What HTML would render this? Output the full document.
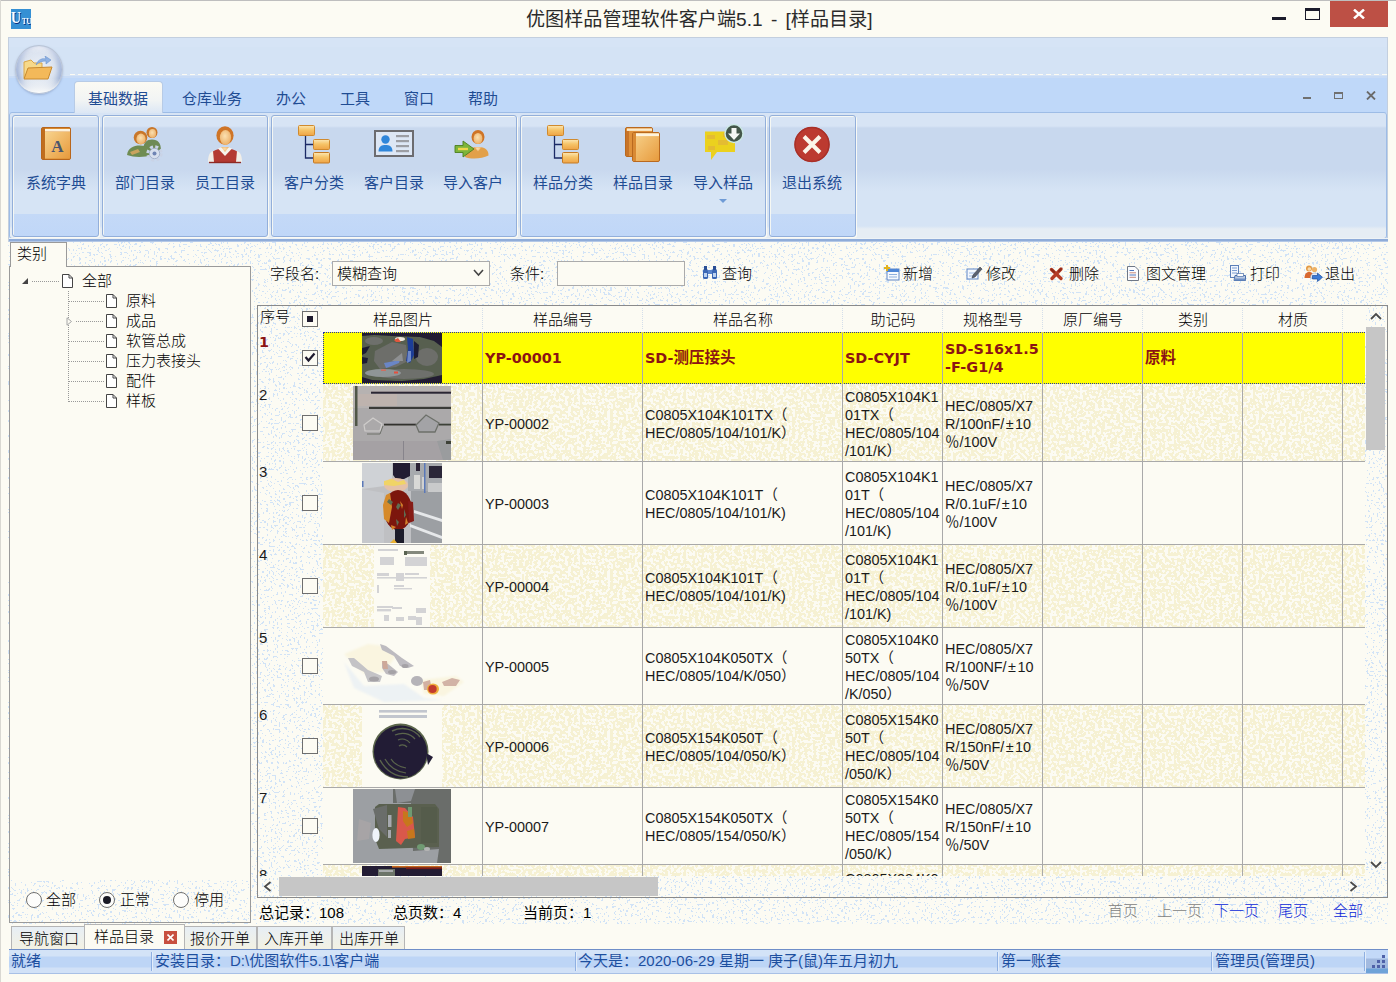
<!DOCTYPE html>
<html lang="zh-CN"><head><meta charset="utf-8"><title>优图样品管理软件客户端5.1 - [样品目录]</title>
<style>
html,body{margin:0;padding:0}
body{width:1396px;height:982px;position:relative;overflow:hidden;background:#FCFBF3;font-family:"Liberation Sans","Noto Sans CJK SC",sans-serif;color:#111;font-size:15px}
.a{position:absolute;box-sizing:border-box}
.c{text-align:center;white-space:nowrap}
.nw{white-space:nowrap}
.rl{color:#1F4C93;font-size:15px;line-height:20px;text-align:center;white-space:nowrap}
.grp{border:1px solid #93AFDA;border-radius:3px;background:linear-gradient(rgba(255,255,255,0) 0,rgba(255,255,255,0) 98px,#C4D9F7 98px,#C0D7F8 100%);box-shadow:inset 1px 1px 0 rgba(252,251,243,.85),1px 1px 0 rgba(252,251,243,.95)}
.sim{font-family:"Liberation Sans","Noto Sans CJK SC",sans-serif;font-weight:300;color:#000}
.t15{font-size:15px;line-height:18px;white-space:nowrap}
.cell{font-size:14.4px;line-height:18px;color:#1a1a1a}
.sel{font-family:"DejaVu Sans","Noto Sans CJK SC",sans-serif;font-weight:bold;color:#8B1414;font-size:14.4px;line-height:18px}
.vl{background:#A9A9A9;width:1px}
.hl{background:#A9A9A9;height:1px}
.cb{border:1px solid #6E6E6E;background:#FCFBF3}
.st{color:#1D4F9F;font-size:15px;line-height:20px;white-space:nowrap}
.bt{font-size:15px;line-height:20px;color:#000;white-space:nowrap;font-weight:300}

</style></head>
<body>
<div class="a" style="left:0px;top:0px;width:1396px;height:1px;background:#BEBEBE"></div>
<div class="a" style="left:0px;top:0px;width:1px;height:982px;background:#D9D8D2"></div>
<div class="a nw" style="left:11px;top:9px;width:20px;height:20px;background:#3590D4;color:#fff;font-family:'Liberation Serif',serif;font-weight:bold;font-size:17px;line-height:19px;overflow:hidden;text-shadow:1px 1px 0 #0B2A7A"><span style="position:absolute;left:0;top:-1px;transform:scaleX(.82);transform-origin:0 0">U</span><span style="position:absolute;left:11px;top:8px;font-size:8px;line-height:9px;transform:scaleX(.85);transform-origin:0 0">TU</span></div>
<div class="a nw" style="left:526px;top:6px;width:400px;height:28px;font-size:19.1px;line-height:28px;color:#2b2b2b;word-spacing:3px">优图样品管理软件客户端5.1 - [样品目录]</div>
<div class="a" style="left:1272px;top:17px;width:14px;height:3px;background:#1b1b2b"></div>
<div class="a" style="left:1305px;top:8px;width:15px;height:12px;border:1px solid #1b1b2b;border-top-width:3px"></div>
<div class="a" style="left:1330px;top:1px;width:58px;height:26px;background:#BD5045"></div>
<svg class="a" style="left:1353px;top:9px" width="12" height="10" viewBox="0 0 12 10"><path d="M1 0.5 L11 9.5 M11 0.5 L1 9.5" stroke="#fff" stroke-width="2.4" fill="none"/></svg>
<div class="a" style="left:8px;top:37px;width:1380px;height:205px;background:#D6E4F6;border:1px solid #C3CFDF;border-bottom:none"></div>
<div class="a" style="left:9px;top:47px;width:1378px;height:28px;background:#D4E3F5"></div>
<div class="a" style="left:70px;top:74px;width:1317px;height:1px;background:repeating-linear-gradient(90deg,#FCFBF3 0 5px,transparent 5px 8px)"></div>
<div class="a" style="left:9px;top:76px;width:1378px;height:2px;background:#C9DCF6"></div>
<div class="a" style="left:9px;top:78px;width:1378px;height:35px;background:#BFD8F9"></div>
<div class="a" style="left:9px;top:112px;width:1378px;height:127px;background:linear-gradient(#D7E4F5 0,#D7E4F5 13px,#C8D8EE 15px,#C8D8EE 56px,#D6E4F5 78px,#D6E4F5 113px,#E6EDF4 116px,#E6EDF4 100%);border:1px solid #9DBCE6;border-radius:3px"></div>
<div class="a" style="left:9px;top:238px;width:1379px;height:1px;background:#EEF3F6"></div>
<div class="a" style="left:9px;top:239px;width:1379px;height:3px;background:linear-gradient(#8FACD9 0,#8FACD9 66%,#B4C8E6 67%,#B4C8E6 100%)"></div>
<div class="a" style="left:15px;top:45px;width:48px;height:49px;border-radius:50%;background:radial-gradient(circle at 50% 45%,#E9EEF6 0,#DCE4F0 45%,#C5D2E6 70%,#D8E0EC 100%);border:1px solid #B9C4D6;box-shadow:0 1px 2px rgba(120,140,180,.5),inset 6px 0 5px -3px rgba(125,150,200,.55),inset -6px 0 5px -3px rgba(125,150,200,.55),inset 0 5px 4px -2px rgba(250,250,252,.9)"></div>
<div class="a" style="left:18px;top:78px;width:42px;height:15px;border-radius:0 0 21px 21px/0 0 15px 15px;background:linear-gradient(rgba(255,255,255,0),#FDFDFB)"></div>
<svg class="a" style="left:22px;top:56px" width="32" height="26" viewBox="0 0 32 26"><path d="M2 6 L9 4 L12 7 L20 7 L20 13 L2 22 Z" fill="#F7D98A" stroke="#D9A64A" stroke-width="1"/><path d="M6 12 L30 11 L26 23 L2 23 Z" fill="#F3B95A" stroke="#C98A2E" stroke-width="1"/><path d="M14 9 C16 3 21 2 24 3 L23 0 L29 4 L24 8 L24 5 C20 5 17 6 14 9 Z" fill="#8FB2E4" stroke="#6C93CE" stroke-width=".6"/></svg>
<div class="a" style="left:74px;top:81px;width:89px;height:32px;background:linear-gradient(#FBFAF3,#F1F4F4 60%,#DCE7F5);border:1px solid #B7CBE6;border-bottom:none;border-radius:4px 4px 0 0"></div>
<div class="a rl" style="left:68px;top:89px;width:100px;height:20px;">基础数据</div>
<div class="a rl" style="left:162px;top:89px;width:100px;height:20px;">仓库业务</div>
<div class="a rl" style="left:241px;top:89px;width:100px;height:20px;">办公</div>
<div class="a rl" style="left:305px;top:89px;width:100px;height:20px;">工具</div>
<div class="a rl" style="left:369px;top:89px;width:100px;height:20px;">窗口</div>
<div class="a rl" style="left:433px;top:89px;width:100px;height:20px;">帮助</div>
<div class="a" style="left:1303px;top:97px;width:8px;height:2px;background:#707070"></div>
<div class="a" style="left:1334px;top:92px;width:9px;height:7px;border:1px solid #707070;border-top-width:2px"></div>
<svg class="a" style="left:1366px;top:91px" width="10" height="9" viewBox="0 0 10 9"><path d="M1 0.5 L9 8.5 M9 0.5 L1 8.5" stroke="#6a6a6a" stroke-width="1.8" fill="none"/></svg>
<div class="a grp" style="left:12px;top:115px;width:87px;height:122px;"></div>
<div class="a grp" style="left:102px;top:115px;width:166px;height:122px;"></div>
<div class="a grp" style="left:271px;top:115px;width:246px;height:122px;"></div>
<div class="a grp" style="left:520px;top:115px;width:246px;height:122px;"></div>
<div class="a grp" style="left:769px;top:115px;width:87px;height:122px;"></div>
<div class="a rl" style="left:16px;top:173px;width:80px;height:20px;">系统字典</div>
<div class="a rl" style="left:105px;top:173px;width:80px;height:20px;">部门目录</div>
<div class="a rl" style="left:185px;top:173px;width:80px;height:20px;">员工目录</div>
<div class="a rl" style="left:274px;top:173px;width:80px;height:20px;">客户分类</div>
<div class="a rl" style="left:354px;top:173px;width:80px;height:20px;">客户目录</div>
<div class="a rl" style="left:433px;top:173px;width:80px;height:20px;">导入客户</div>
<div class="a rl" style="left:523px;top:173px;width:80px;height:20px;">样品分类</div>
<div class="a rl" style="left:603px;top:173px;width:80px;height:20px;">样品目录</div>
<div class="a rl" style="left:683px;top:173px;width:80px;height:20px;">导入样品</div>
<div class="a rl" style="left:772px;top:173px;width:80px;height:20px;">退出系统</div>
<div class="a" style="left:719px;top:199px;width:0px;height:0px;border:4px solid transparent;border-top:4px solid #6F9BD6;width:0;height:0"></div>
<svg class="a" width="0" height="0" style="left:0;top:0"><defs><linearGradient id="gb" x1="0" y1="0" x2="1" y2="1"><stop offset="0" stop-color="#F8D48E"/><stop offset="1" stop-color="#E79A3C"/></linearGradient><linearGradient id="gbx" x1="0" y1="0" x2="0" y2="1"><stop offset="0" stop-color="#FCE7B4"/><stop offset=".45" stop-color="#F6C468"/><stop offset="1" stop-color="#EFA446"/></linearGradient><radialGradient id="gsk" cx=".45" cy=".4" r=".7"><stop offset="0" stop-color="#FBE0B0"/><stop offset="1" stop-color="#E9A95E"/></radialGradient></defs></svg>
<svg class="a" style="left:40px;top:126px" width="34" height="36" viewBox="0 0 34 36"><rect x="1.5" y="1.5" width="29" height="32" rx="1.5" fill="#D98A2E" stroke="#B8661C"/><rect x="2" y="2" width="3" height="31" fill="#C06E1E"/><rect x="5" y="3" width="25" height="2.6" fill="#FDF3DE"/><rect x="5" y="6" width="25" height="26.5" fill="url(#gb)"/><text x="17.5" y="26" font-family="Liberation Serif,serif" font-weight="bold" font-size="17" text-anchor="middle" fill="#4A556E">A</text></svg>
<svg class="a" style="left:126px;top:124px" width="38" height="40" viewBox="0 0 38 40"><circle cx="26" cy="8.5" r="5.5" fill="#C9772A"/><ellipse cx="26.5" cy="9.5" rx="3.6" ry="4.4" fill="url(#gsk)"/><path d="M17 27 C17 18 21 15.5 26 15.5 C32 15.5 35 19 35 27 Z" fill="#6E8A55"/><circle cx="14.5" cy="13.5" r="6.8" fill="#C9772A"/><ellipse cx="15" cy="15" rx="4.6" ry="5.4" fill="url(#gsk)"/><path d="M1 31 C2 24 7 21.5 14 21.5 C21 21.5 26 25 26 31 C18 33.5 8 33.5 1 31 Z" fill="#6F8C52"/><path d="M4 28 L12 25 L14 28 L6 31 Z" fill="#C9A35E"/><circle cx="28.500" cy="29.500" r="6.5" fill="none" stroke="#C9D3E6" stroke-width="3.4" stroke-dasharray="2.9 2.2"/><circle cx="28.5" cy="29.5" r="5.2" fill="#D7DFEE" stroke="#9AA8C4" stroke-width=".8"/><circle cx="28.5" cy="29.5" r="2" fill="#6F84B4"/></svg>
<svg class="a" style="left:206px;top:124px" width="38" height="40" viewBox="0 0 38 40"><ellipse cx="19" cy="11.5" rx="8.6" ry="9.2" fill="#CF7426"/><ellipse cx="19.5" cy="13.5" rx="5.6" ry="7.4" fill="url(#gsk)"/><path d="M3 38 C3 28 8 24.5 19 24.5 C30 24.5 35 28 35 38 Z" fill="#B43A32"/><path d="M12 24.5 L19 32 L26 24.5 L22 23 H16 Z" fill="#F6F3EC"/><path d="M15 23 h8 l-4 5 z" fill="url(#gsk)"/><path d="M2 38 C2 31 4 28 7 27 L8 38 Z" fill="#F1EEE8"/><path d="M36 38 C36 31 34 28 31 27 L30 38 Z" fill="#F1EEE8"/><path d="M3 38.5 H35" stroke="#8E2A24" stroke-width="1.4"/></svg>
<svg class="a" style="left:297px;top:124px" width="36" height="42" viewBox="0 0 36 42"><path d="M8.500 11 V34 H16 M8.500 20.500 H16" stroke="#1B2A66" stroke-width="1.3" fill="none"/><rect x="1.500" y="1.500" width="16" height="10" rx="1" fill="url(#gbx)" stroke="#D08A2E"/><rect x="16.500" y="15.500" width="16" height="10" rx="1" fill="url(#gbx)" stroke="#D08A2E"/><rect x="16.500" y="28.500" width="16" height="10.500" rx="1" fill="url(#gbx)" stroke="#C47A24"/></svg>
<svg class="a" style="left:546px;top:124px" width="36" height="42" viewBox="0 0 36 42"><path d="M8.500 11 V34 H16 M8.500 20.500 H16" stroke="#1B2A66" stroke-width="1.3" fill="none"/><rect x="1.500" y="1.500" width="16" height="10" rx="1" fill="url(#gbx)" stroke="#D08A2E"/><rect x="16.500" y="15.500" width="16" height="10" rx="1" fill="url(#gbx)" stroke="#D08A2E"/><rect x="16.500" y="28.500" width="16" height="10.500" rx="1" fill="url(#gbx)" stroke="#C47A24"/></svg>
<svg class="a" style="left:373px;top:129px" width="42" height="30" viewBox="0 0 42 30"><rect x="2" y="2" width="38" height="25" fill="#DDE7F5" stroke="#6C6C70" stroke-width="2"/><circle cx="12.5" cy="10.5" r="4.2" fill="#2F86DA"/><path d="M5.500 22.500 C5.500 17 9 16 12.500 16 C16 16 19.500 17 19.500 22.500 Z" fill="#2F86DA"/><rect x="23" y="6" width="13" height="2.200" fill="#9C9EA4"/><rect x="23" y="11" width="13" height="2.200" fill="#9C9EA4"/><rect x="23" y="16" width="13" height="2.200" fill="#9C9EA4"/><rect x="23" y="21" width="13" height="2.200" fill="#9C9EA4"/></svg>
<svg class="a" style="left:452px;top:126px" width="40" height="38" viewBox="0 0 40 38"><ellipse cx="26" cy="11" rx="6.500" ry="7" fill="#CF7426"/><ellipse cx="26" cy="12.500" rx="4.400" ry="5.600" fill="url(#gsk)"/><path d="M13 31 C13 24 18 21 26 21 C33.500 21 36.500 24 36.500 29.500 C30 33 19 33.500 13 31 Z" fill="#E2A04A"/><path d="M22.500 21 h7 l-3.500 4.500 z" fill="url(#gsk)"/><path d="M3 19.500 H11 V15 L22 23 L11 31 V26.500 H3 Z" fill="#7DB53A" stroke="#4C7F1E" stroke-width=".9"/><path d="M6 23 H16" stroke="#EFD64A" stroke-width="2.400"/></svg>
<svg class="a" style="left:624px;top:125px" width="38" height="38" viewBox="0 0 38 38"><rect x="1.500" y="2.500" width="27" height="29" rx="1.500" fill="#E0913A" stroke="#B9691F"/><rect x="3" y="3.500" width="25" height="2.400" fill="#FBEBCB"/><rect x="2" y="6" width="3" height="25" fill="#C87428"/><rect x="8.500" y="7.500" width="27" height="29" rx="1.500" fill="url(#gb)" stroke="#B9691F"/><rect x="9" y="8" width="3" height="28" fill="#D98A34"/><rect x="12" y="8.500" width="23" height="2.600" fill="#FDF3DE"/></svg>
<svg class="a" style="left:703px;top:122px" width="44" height="42" viewBox="0 0 44 42"><path d="M2 9.500 H32 V30 H14 L8 38 V30 H2 Z" fill="#EBD11E"/><path d="M4 13 h8 v4 h-8z M15 18 h10 v5 h-10z M5 24 h7 v4 h-7z M20 11 h6 v4 h-6z" fill="#E2B43A" opacity=".75"/><circle cx="31" cy="11.500" r="9" fill="#44574A" stroke="#CDEAE6" stroke-width="1.400"/><path d="M28.500 6 h5 v5.500 h3.500 l-6 6.500 l-6 -6.500 h3.500 z" fill="#F4F7F4"/></svg>
<svg class="a" style="left:793px;top:126px" width="38" height="38" viewBox="0 0 38 38"><circle cx="19" cy="18.500" r="17.500" fill="#BC3A30"/><circle cx="19" cy="18.500" r="17" fill="none" stroke="#A83028" stroke-width="1.500"/><path d="M11 10.500 L27 26.500 M27 10.500 L11 26.500" stroke="#FBF5EA" stroke-width="4" stroke-linecap="butt"/></svg>
<div class="a" style="left:8px;top:242px;width:1380px;height:708px;background:#FCFBF3"></div>
<svg class="a" style="left:0;top:0" width="1396" height="982"><defs><filter id="dy" x="0" y="0" width="100%" height="100%" color-interpolation-filters="sRGB"><feTurbulence type="fractalNoise" baseFrequency="0.33" numOctaves="1" seed="3"/><feColorMatrix type="matrix" values="0 0 0 0 0.965  0 0 0 0 0.945  0 0 0 0 0.828  1 0 0 0 0"/><feComponentTransfer><feFuncA type="discrete" tableValues="0 0 0 0 0 0 0 0 0 0 0 0 0 0 0 0 0 0 0 1 1 1 1 1 1 1 1 1 1 1 1 1 1 1 1 1 1 1 1 1"/></feComponentTransfer></filter><filter id="db" x="0" y="0" width="100%" height="100%" color-interpolation-filters="sRGB"><feTurbulence type="fractalNoise" baseFrequency="0.48" numOctaves="1" seed="7"/><feColorMatrix type="matrix" values="0 0 0 0 0.82  0 0 0 0 0.89  0 0 0 0 0.97  1 0 0 0 0"/><feComponentTransfer><feFuncA type="discrete" tableValues="0 0 0 0 0 0 0 0 0 0 0 0 0 0 0 0 0 0 0 0 0 0 0 0 0 0 0 0 0 0 0 0 0 0 0 0 0 0 0 0 0 0 0 0 0 0 0 0 0 0 1 1 1 1 1 1 1 1 1 1 1 1 1 1 1 1 1 1 1 1 1 1 1 1 1 1 1 1 1 1"/></feComponentTransfer></filter></defs><rect x="8" y="242" width="1380" height="682" fill="#F6F8F5" filter="url(#db)"/></svg>
<div class="a" style="left:10px;top:267px;width:240px;height:613px;background:#FCFBF3"></div>
<div class="a" style="left:9px;top:266px;width:242px;height:657px;border:1px solid #9A9A9A"></div>
<div class="a" style="left:10px;top:242px;width:57px;height:25px;background:#FCFBF3;border:1px solid #9A9A9A;border-bottom:none"></div>
<div class="a sim t15" style="left:17px;top:245px;width:40px;height:18px;">类别</div>
<svg class="a" style="left:21px;top:277px" width="8" height="8" viewBox="0 0 8 8"><path d="M7 1 V7 H1 Z" fill="#444"/></svg>
<div class="a" style="left:32px;top:281px;width:28px;height:1px;background:repeating-linear-gradient(90deg,#999 0 1px,transparent 1px 2px)"></div>
<svg class="a" style="left:62px;top:274px" width="11" height="14" viewBox="0 0 11 14"><path d="M.5 .5 H7 L10.5 4 V13.5 H.5 Z" fill="#fff" stroke="#444" stroke-width="1"/><path d="M7 .5 V4 H10.5" fill="none" stroke="#444" stroke-width="1"/></svg>
<div class="a sim t15" style="left:82px;top:272px;width:60px;height:18px;">全部</div>
<div class="a" style="left:68px;top:291px;width:1px;height:111px;background:repeating-linear-gradient(180deg,#999 0 1px,transparent 1px 2px)"></div>
<div class="a" style="left:69px;top:301px;width:35px;height:1px;background:repeating-linear-gradient(90deg,#999 0 1px,transparent 1px 2px)"></div>
<svg class="a" style="left:106px;top:294px" width="11" height="14" viewBox="0 0 11 14"><path d="M.5 .5 H7 L10.5 4 V13.5 H.5 Z" fill="#fff" stroke="#444" stroke-width="1"/><path d="M7 .5 V4 H10.5" fill="none" stroke="#444" stroke-width="1"/></svg>
<div class="a sim t15" style="left:126px;top:292px;width:100px;height:18px;">原料</div>
<div class="a" style="left:76px;top:321px;width:28px;height:1px;background:repeating-linear-gradient(90deg,#999 0 1px,transparent 1px 2px)"></div>
<svg class="a" style="left:106px;top:314px" width="11" height="14" viewBox="0 0 11 14"><path d="M.5 .5 H7 L10.5 4 V13.5 H.5 Z" fill="#fff" stroke="#444" stroke-width="1"/><path d="M7 .5 V4 H10.5" fill="none" stroke="#444" stroke-width="1"/></svg>
<div class="a sim t15" style="left:126px;top:312px;width:100px;height:18px;">成品</div>
<div class="a" style="left:69px;top:341px;width:35px;height:1px;background:repeating-linear-gradient(90deg,#999 0 1px,transparent 1px 2px)"></div>
<svg class="a" style="left:106px;top:334px" width="11" height="14" viewBox="0 0 11 14"><path d="M.5 .5 H7 L10.5 4 V13.5 H.5 Z" fill="#fff" stroke="#444" stroke-width="1"/><path d="M7 .5 V4 H10.5" fill="none" stroke="#444" stroke-width="1"/></svg>
<div class="a sim t15" style="left:126px;top:332px;width:100px;height:18px;">软管总成</div>
<div class="a" style="left:69px;top:361px;width:35px;height:1px;background:repeating-linear-gradient(90deg,#999 0 1px,transparent 1px 2px)"></div>
<svg class="a" style="left:106px;top:354px" width="11" height="14" viewBox="0 0 11 14"><path d="M.5 .5 H7 L10.5 4 V13.5 H.5 Z" fill="#fff" stroke="#444" stroke-width="1"/><path d="M7 .5 V4 H10.5" fill="none" stroke="#444" stroke-width="1"/></svg>
<div class="a sim t15" style="left:126px;top:352px;width:100px;height:18px;">压力表接头</div>
<div class="a" style="left:69px;top:381px;width:35px;height:1px;background:repeating-linear-gradient(90deg,#999 0 1px,transparent 1px 2px)"></div>
<svg class="a" style="left:106px;top:374px" width="11" height="14" viewBox="0 0 11 14"><path d="M.5 .5 H7 L10.5 4 V13.5 H.5 Z" fill="#fff" stroke="#444" stroke-width="1"/><path d="M7 .5 V4 H10.5" fill="none" stroke="#444" stroke-width="1"/></svg>
<div class="a sim t15" style="left:126px;top:372px;width:100px;height:18px;">配件</div>
<div class="a" style="left:69px;top:401px;width:35px;height:1px;background:repeating-linear-gradient(90deg,#999 0 1px,transparent 1px 2px)"></div>
<svg class="a" style="left:106px;top:394px" width="11" height="14" viewBox="0 0 11 14"><path d="M.5 .5 H7 L10.5 4 V13.5 H.5 Z" fill="#fff" stroke="#444" stroke-width="1"/><path d="M7 .5 V4 H10.5" fill="none" stroke="#444" stroke-width="1"/></svg>
<div class="a sim t15" style="left:126px;top:392px;width:100px;height:18px;">样板</div>
<svg class="a" style="left:66px;top:317px" width="7" height="9" viewBox="0 0 7 9"><path d="M1 .8 L5.5 4.5 L1 8.2 Z" fill="#FCFBF3" stroke="#A6A6A6" stroke-width="1"/></svg>
<div class="a" style="left:26px;top:892px;width:16px;height:16px;border-radius:50%;border:1px solid #707070;background:#FDFDFB"></div>
<div class="a sim t15" style="left:46px;top:891px;width:40px;height:18px;">全部</div>
<div class="a" style="left:99px;top:892px;width:16px;height:16px;border-radius:50%;border:1px solid #707070;background:#FDFDFB"></div>
<div class="a" style="left:103px;top:896px;width:8px;height:8px;border-radius:50%;background:#1A1A26"></div>
<div class="a sim t15" style="left:120px;top:891px;width:40px;height:18px;">正常</div>
<div class="a" style="left:173px;top:892px;width:16px;height:16px;border-radius:50%;border:1px solid #707070;background:#FDFDFB"></div>
<div class="a sim t15" style="left:194px;top:891px;width:40px;height:18px;">停用</div>
<div class="a sim t15" style="left:270px;top:265px;width:60px;height:18px;">字段名:</div>
<div class="a" style="left:332px;top:261px;width:158px;height:25px;background:#FCFBF3;border:1px solid #ABABAB"></div>
<div class="a sim t15" style="left:337px;top:265px;width:100px;height:18px;">模糊查询</div>
<svg class="a" style="left:473px;top:269px" width="11" height="8" viewBox="0 0 11 8"><path d="M1 1 L5.5 6 L10 1" fill="none" stroke="#444" stroke-width="1.6"/></svg>
<div class="a sim t15" style="left:510px;top:265px;width:50px;height:18px;">条件:</div>
<div class="a" style="left:557px;top:261px;width:128px;height:25px;background:#FCFBF3;border:1px solid #ABABAB"></div>
<svg class="a" style="left:702px;top:265px" width="16" height="15" viewBox="0 0 16 15"><rect x="1" y="4" width="5" height="10" rx="1.5" fill="#3B67B5"/><rect x="10" y="4" width="5" height="10" rx="1.5" fill="#3B67B5"/><rect x="2" y="1" width="3" height="4" fill="#2A4E94"/><rect x="11" y="1" width="3" height="4" fill="#2A4E94"/><rect x="6" y="5" width="4" height="4" fill="#5C86CC"/><rect x="2" y="8" width="3" height="4" fill="#BCD2F0"/><rect x="11" y="8" width="3" height="4" fill="#BCD2F0"/></svg>
<div class="a sim t15" style="left:722px;top:265px;width:40px;height:18px;">查询</div>
<div class="a sim t15" style="left:903px;top:265px;width:80px;height:18px;">新增</div>
<div class="a sim t15" style="left:986px;top:265px;width:80px;height:18px;">修改</div>
<div class="a sim t15" style="left:1069px;top:265px;width:80px;height:18px;">删除</div>
<div class="a sim t15" style="left:1146px;top:265px;width:80px;height:18px;">图文管理</div>
<div class="a sim t15" style="left:1250px;top:265px;width:80px;height:18px;">打印</div>
<div class="a sim t15" style="left:1325px;top:265px;width:80px;height:18px;">退出</div>
<svg class="a" style="left:884px;top:265px" width="16" height="16" viewBox="0 0 16 16"><rect x="3" y="4" width="12" height="11" fill="#F7FAFE" stroke="#5E86C6"/><rect x="3" y="4" width="12" height="3" fill="#4F86D6"/><path d="M5 9.5 H13 M5 12 H13" stroke="#8FB0DE"/><path d="M3 0 V6 M0 3 H6" stroke="#E2B21C" stroke-width="2"/></svg>
<svg class="a" style="left:966px;top:265px" width="17" height="16" viewBox="0 0 17 16"><rect x="1" y="4" width="11" height="10" fill="#F4F8FD" stroke="#5E86C6"/><path d="M3 8 H9 M3 11 H8" stroke="#9DB8E0"/><path d="M7 10 L14 2 L16 4 L9 12 L6 13 Z" fill="#5B6270" stroke="#3C4048" stroke-width=".6"/></svg>
<svg class="a" style="left:1049px;top:267px" width="15" height="14" viewBox="0 0 15 14"><path d="M2.5 2.500 L12 11.500 M12 2 L3 11.500" stroke="#B43C26" stroke-width="3.300" stroke-linecap="round"/><path d="M2.500 2.500 L5 5 M12 2 L10 4" stroke="#8E2A1A" stroke-width="2" stroke-linecap="round"/></svg>
<svg class="a" style="left:1127px;top:266px" width="12" height="15" viewBox="0 0 12 15"><path d="M.5 .5 H8 L11.500 4 V14.500 H.5 Z" fill="#FBFCFE" stroke="#6F7886"/><path d="M2.500 4.500 H7 M2.500 9 H9" stroke="#4F78C0"/><path d="M2.500 6.800 H9 M2.500 11.300 H9" stroke="#C98A7A"/></svg>
<svg class="a" style="left:1229px;top:264px" width="18" height="18" viewBox="0 0 18 18"><rect x="1.500" y="1.500" width="8" height="12" fill="#F2F6FC" stroke="#5C7FB8"/><path d="M3 4 H8 M3 6.500 H8 M3 9 H8" stroke="#7FA0D4"/><path d="M6 11.500 H16.500 V16.500 H5 Z" fill="#B9C8E2" stroke="#4B6FA8"/><rect x="8" y="9.500" width="6.500" height="3" fill="#FDFDFD" stroke="#4B6FA8" stroke-width=".7"/><rect x="5" y="14.500" width="11.500" height="2" fill="#6F8FC4"/></svg>
<svg class="a" style="left:1304px;top:264px" width="19" height="18" viewBox="0 0 19 18"><circle cx="5" cy="4.500" r="3" fill="#E39A44"/><circle cx="5.300" cy="5" r="1.800" fill="#F8D9A8"/><path d="M0.500 14 C0.500 9.500 3 8 5 8 C8 8 9.500 9.500 9.500 14 Z" fill="#D8682E"/><circle cx="10.500" cy="5.500" r="2.600" fill="#EDB267"/><path d="M6.500 14 C6.500 10.500 8.500 9 10.500 9 C13 9 14.500 11 14.500 14 Z" fill="#E9EEF6" stroke="#9AA8C0" stroke-width=".6"/><path d="M8.500 11.500 H13.500 V9 L18.500 13.300 L13.500 17.500 V15 H8.500 Z" fill="#3C7BD6" stroke="#1D4F9F" stroke-width=".7"/></svg>
<div class="a" style="left:257px;top:305px;width:1131px;height:593px;border:1px solid #8A8A8A"></div>
<div class="a" style="left:323px;top:306px;width:1043px;height:26px;background:#FCFBF3"></div>
<div class="a" style="left:323px;top:332px;width:1042px;height:52px;background:#FFFF00;border:1px dotted #2233AA;border-right:none"></div>
<div class="a" style="left:323px;top:384px;width:1042px;height:77px;background:#FCFBF3"></div>
<svg class="a" style="left:323px;top:384px" width="1042" height="77"><rect width="1042" height="77" fill="#F9F5DF" filter="url(#dy)"/></svg>
<div class="a" style="left:323px;top:461px;width:1042px;height:83px;background:#FCFBF3"></div>
<div class="a" style="left:323px;top:544px;width:1042px;height:83px;background:#FCFBF3"></div>
<svg class="a" style="left:323px;top:544px" width="1042" height="83"><rect width="1042" height="83" fill="#F9F5DF" filter="url(#dy)"/></svg>
<div class="a" style="left:323px;top:627px;width:1042px;height:77px;background:#FCFBF3"></div>
<div class="a" style="left:323px;top:704px;width:1042px;height:83px;background:#FCFBF3"></div>
<svg class="a" style="left:323px;top:704px" width="1042" height="83"><rect width="1042" height="83" fill="#F9F5DF" filter="url(#dy)"/></svg>
<div class="a" style="left:323px;top:787px;width:1042px;height:77px;background:#FCFBF3"></div>
<div class="a" style="left:323px;top:864px;width:1042px;height:12px;background:#FCFBF3"></div>
<svg class="a" style="left:323px;top:864px" width="1042" height="12"><rect width="1042" height="12" fill="#F9F5DF" filter="url(#dy)"/></svg>
<div class="a hl" style="left:323px;top:461px;width:1042px;height:1px;"></div>
<div class="a hl" style="left:323px;top:544px;width:1042px;height:1px;"></div>
<div class="a hl" style="left:323px;top:627px;width:1042px;height:1px;"></div>
<div class="a hl" style="left:323px;top:704px;width:1042px;height:1px;"></div>
<div class="a hl" style="left:323px;top:787px;width:1042px;height:1px;"></div>
<div class="a hl" style="left:323px;top:864px;width:1042px;height:1px;"></div>
<div class="a vl" style="left:482px;top:332px;width:1px;height:544px;"></div>
<div class="a" style="left:482px;top:308px;width:1px;height:22px;background:repeating-linear-gradient(180deg,#D4DEEA 0 1px,transparent 1px 2px)"></div>
<div class="a vl" style="left:642px;top:332px;width:1px;height:544px;"></div>
<div class="a" style="left:642px;top:308px;width:1px;height:22px;background:repeating-linear-gradient(180deg,#D4DEEA 0 1px,transparent 1px 2px)"></div>
<div class="a vl" style="left:842px;top:332px;width:1px;height:544px;"></div>
<div class="a" style="left:842px;top:308px;width:1px;height:22px;background:repeating-linear-gradient(180deg,#D4DEEA 0 1px,transparent 1px 2px)"></div>
<div class="a vl" style="left:942px;top:332px;width:1px;height:544px;"></div>
<div class="a" style="left:942px;top:308px;width:1px;height:22px;background:repeating-linear-gradient(180deg,#D4DEEA 0 1px,transparent 1px 2px)"></div>
<div class="a vl" style="left:1042px;top:332px;width:1px;height:544px;"></div>
<div class="a" style="left:1042px;top:308px;width:1px;height:22px;background:repeating-linear-gradient(180deg,#D4DEEA 0 1px,transparent 1px 2px)"></div>
<div class="a vl" style="left:1142px;top:332px;width:1px;height:544px;"></div>
<div class="a" style="left:1142px;top:308px;width:1px;height:22px;background:repeating-linear-gradient(180deg,#D4DEEA 0 1px,transparent 1px 2px)"></div>
<div class="a vl" style="left:1242px;top:332px;width:1px;height:544px;"></div>
<div class="a" style="left:1242px;top:308px;width:1px;height:22px;background:repeating-linear-gradient(180deg,#D4DEEA 0 1px,transparent 1px 2px)"></div>
<div class="a vl" style="left:1342px;top:332px;width:1px;height:544px;"></div>
<div class="a" style="left:1342px;top:308px;width:1px;height:22px;background:repeating-linear-gradient(180deg,#D4DEEA 0 1px,transparent 1px 2px)"></div>
<div class="a sim t15" style="left:260px;top:308px;width:40px;height:18px;">序号</div>
<div class="a cb" style="left:302px;top:311px;width:16px;height:16px;"></div>
<div class="a" style="left:307px;top:316px;width:6px;height:6px;background:#1E1A2E"></div>
<div class="a sim t15" style="left:343px;top:311px;width:120px;height:18px;text-align:center">样品图片</div>
<div class="a sim t15" style="left:503px;top:311px;width:120px;height:18px;text-align:center">样品编号</div>
<div class="a sim t15" style="left:683px;top:311px;width:120px;height:18px;text-align:center">样品名称</div>
<div class="a sim t15" style="left:833px;top:311px;width:120px;height:18px;text-align:center">助记码</div>
<div class="a sim t15" style="left:933px;top:311px;width:120px;height:18px;text-align:center">规格型号</div>
<div class="a sim t15" style="left:1033px;top:311px;width:120px;height:18px;text-align:center">原厂编号</div>
<div class="a sim t15" style="left:1133px;top:311px;width:120px;height:18px;text-align:center">类别</div>
<div class="a sim t15" style="left:1233px;top:311px;width:120px;height:18px;text-align:center">材质</div>
<div class="a sel" style="left:259px;top:333px;width:20px;height:18px;">1</div>
<div class="a cb" style="left:302px;top:350px;width:16px;height:16px;"></div>
<div class="a cell" style="left:259px;top:386px;width:20px;height:18px;font-size:15px">2</div>
<div class="a cb" style="left:302px;top:415px;width:16px;height:16px;"></div>
<div class="a cell" style="left:259px;top:463px;width:20px;height:18px;font-size:15px">3</div>
<div class="a cb" style="left:302px;top:495px;width:16px;height:16px;"></div>
<div class="a cell" style="left:259px;top:546px;width:20px;height:18px;font-size:15px">4</div>
<div class="a cb" style="left:302px;top:578px;width:16px;height:16px;"></div>
<div class="a cell" style="left:259px;top:629px;width:20px;height:18px;font-size:15px">5</div>
<div class="a cb" style="left:302px;top:658px;width:16px;height:16px;"></div>
<div class="a cell" style="left:259px;top:706px;width:20px;height:18px;font-size:15px">6</div>
<div class="a cb" style="left:302px;top:738px;width:16px;height:16px;"></div>
<div class="a cell" style="left:259px;top:789px;width:20px;height:18px;font-size:15px">7</div>
<div class="a cb" style="left:302px;top:818px;width:16px;height:16px;"></div>
<div class="a cell" style="left:259px;top:866px;width:20px;height:10px;overflow:hidden;font-size:15px">8</div>
<svg class="a" style="left:304px;top:352px" width="12" height="11" viewBox="0 0 12 11"><path d="M1.5 5 L4.5 8.5 L10.5 1.5" fill="none" stroke="#1E1A2E" stroke-width="2.2"/></svg>
<div class="a sel" style="left:485px;top:349px;width:157px;height:18px;white-space:nowrap">YP-00001</div>
<div class="a sel" style="left:645px;top:349px;width:197px;height:18px;white-space:nowrap">SD-<span style="font-size:15.5px">测压接头</span></div>
<div class="a sel" style="left:845px;top:349px;width:97px;height:18px;white-space:nowrap">SD-CYJT</div>
<div class="a sel" style="left:945px;top:340px;width:97px;height:36px;white-space:nowrap">SD-S16x1.5<br>-F-G1/4</div>
<div class="a sel" style="left:1145px;top:349px;width:97px;height:18px;white-space:nowrap"><span style="font-size:15.5px">原料</span></div>
<div class="a cell" style="left:485px;top:415px;width:157px;height:18px;white-space:nowrap">YP-00002</div>
<div class="a cell" style="left:645px;top:406px;width:197px;height:36px;white-space:nowrap">C0805X104K101TX（<br>HEC/0805/104/101/K）</div>
<div class="a cell" style="left:845px;top:388px;width:97px;height:72px;white-space:nowrap">C0805X104K1<br>01TX（<br>HEC/0805/104<br>/101/K）</div>
<div class="a cell" style="left:945px;top:397px;width:97px;height:54px;white-space:nowrap">HEC/0805/X7<br>R/100nF/<span style="margin:0 1.5px">±</span>10<br>％/100V</div>
<div class="a cell" style="left:485px;top:495px;width:157px;height:18px;white-space:nowrap">YP-00003</div>
<div class="a cell" style="left:645px;top:486px;width:197px;height:36px;white-space:nowrap">C0805X104K101T（<br>HEC/0805/104/101/K)</div>
<div class="a cell" style="left:845px;top:468px;width:97px;height:72px;white-space:nowrap">C0805X104K1<br>01T（<br>HEC/0805/104<br>/101/K)</div>
<div class="a cell" style="left:945px;top:477px;width:97px;height:54px;white-space:nowrap">HEC/0805/X7<br>R/0.1uF/<span style="margin:0 1.5px">±</span>10<br>％/100V</div>
<div class="a cell" style="left:485px;top:578px;width:157px;height:18px;white-space:nowrap">YP-00004</div>
<div class="a cell" style="left:645px;top:569px;width:197px;height:36px;white-space:nowrap">C0805X104K101T（<br>HEC/0805/104/101/K)</div>
<div class="a cell" style="left:845px;top:551px;width:97px;height:72px;white-space:nowrap">C0805X104K1<br>01T（<br>HEC/0805/104<br>/101/K)</div>
<div class="a cell" style="left:945px;top:560px;width:97px;height:54px;white-space:nowrap">HEC/0805/X7<br>R/0.1uF/<span style="margin:0 1.5px">±</span>10<br>％/100V</div>
<div class="a cell" style="left:485px;top:658px;width:157px;height:18px;white-space:nowrap">YP-00005</div>
<div class="a cell" style="left:645px;top:649px;width:197px;height:36px;white-space:nowrap">C0805X104K050TX（<br>HEC/0805/104/K/050）</div>
<div class="a cell" style="left:845px;top:631px;width:97px;height:72px;white-space:nowrap">C0805X104K0<br>50TX（<br>HEC/0805/104<br>/K/050）</div>
<div class="a cell" style="left:945px;top:640px;width:97px;height:54px;white-space:nowrap">HEC/0805/X7<br>R/100NF/<span style="margin:0 1.5px">±</span>10<br>％/50V</div>
<div class="a cell" style="left:485px;top:738px;width:157px;height:18px;white-space:nowrap">YP-00006</div>
<div class="a cell" style="left:645px;top:729px;width:197px;height:36px;white-space:nowrap">C0805X154K050T（<br>HEC/0805/104/050/K）</div>
<div class="a cell" style="left:845px;top:711px;width:97px;height:72px;white-space:nowrap">C0805X154K0<br>50T（<br>HEC/0805/104<br>/050/K）</div>
<div class="a cell" style="left:945px;top:720px;width:97px;height:54px;white-space:nowrap">HEC/0805/X7<br>R/150nF/<span style="margin:0 1.5px">±</span>10<br>％/50V</div>
<div class="a cell" style="left:485px;top:818px;width:157px;height:18px;white-space:nowrap">YP-00007</div>
<div class="a cell" style="left:645px;top:809px;width:197px;height:36px;white-space:nowrap">C0805X154K050TX（<br>HEC/0805/154/050/K）</div>
<div class="a cell" style="left:845px;top:791px;width:97px;height:72px;white-space:nowrap">C0805X154K0<br>50TX（<br>HEC/0805/154<br>/050/K）</div>
<div class="a cell" style="left:945px;top:800px;width:97px;height:54px;white-space:nowrap">HEC/0805/X7<br>R/150nF/<span style="margin:0 1.5px">±</span>10<br>％/50V</div>
<div class="a cell" style="left:845px;top:868px;width:97px;height:8px;overflow:hidden;white-space:nowrap"><span style="position:relative;top:2px">C0805X224K0</span></div>
<div class="a" style="left:1366px;top:327px;width:19px;height:123px;background:#C6C6C6"></div>
<svg class="a" style="left:1370px;top:312px" width="12" height="8" viewBox="0 0 12 8"><path d="M1 7 L6 2 L11 7" fill="none" stroke="#4A4A4A" stroke-width="1.8"/></svg>
<svg class="a" style="left:1370px;top:861px" width="12" height="8" viewBox="0 0 12 8"><path d="M1 1 L6 6 L11 1" fill="none" stroke="#4A4A4A" stroke-width="1.8"/></svg>
<div class="a" style="left:279px;top:877px;width:379px;height:19px;background:#C6C6C6"></div>
<svg class="a" style="left:263px;top:881px" width="9" height="11" viewBox="0 0 9 11"><path d="M7.5 1 L2 5.5 L7.5 10" fill="none" stroke="#4A4A4A" stroke-width="1.8"/></svg>
<svg class="a" style="left:1349px;top:881px" width="9" height="11" viewBox="0 0 9 11"><path d="M1.5 1 L7 5.5 L1.5 10" fill="none" stroke="#4A4A4A" stroke-width="1.8"/></svg>
<svg class="a" width="0" height="0" style="left:0;top:0"><defs><filter id="b1" x="-5%" y="-5%" width="110%" height="110%"><feGaussianBlur stdDeviation="0.7"/></filter><filter id="b2" x="-5%" y="-5%" width="110%" height="110%"><feGaussianBlur stdDeviation="1.3"/></filter></defs></svg>
<svg class="a" style="left:362px;top:333px;" width="80" height="50" viewBox="0 0 80 50"><rect width="80" height="50" fill="#575F4F"/>
<g filter="url(#b1)">
<path d="M0 0 H80 V14 L72 8 L58 4 L30 3 L12 2 L0 3 Z" fill="#201D31"/>
<path d="M0 15 L8 13 L4 20 L0 22 Z M0 24 L6 25 L5 30 L0 31 Z" fill="#1F1D33"/>
<path d="M0 44 L10 47 L40 48 L62 46 L80 42 V50 H0 Z" fill="#211E30"/>
<ellipse cx="12" cy="8" rx="9" ry="4" fill="#6E6F6C"/>
<path d="M13 18 L30 9 L44 12 L46 28 L34 34 L18 36 L12 28 Z" fill="#6D6E6B"/>
<ellipse cx="65" cy="24" rx="11" ry="9" fill="#6D6E6B"/>
<ellipse cx="42" cy="41" rx="30" ry="5" fill="#6E6F6C"/>
<ellipse cx="21" cy="40" rx="18" ry="4" fill="#8F9596"/>
<path d="M45 4 L51 6 L52 22 L48 30 L44 28 L46 16 Z" fill="#1D3C98"/>
<path d="M52 8 L57 12 L56 24 L52 26 Z" fill="#1E1C34"/>
<path d="M46 18 L49 18 L49 28 L45 30 Z" fill="#6E88C8"/>
<path d="M22 30 L38 27 L37 30 L27 34 L24 35 Z" fill="#6B86C6"/>
<path d="M30 28 L40 20 L41 28 Z" fill="#8E9092"/>
<ellipse cx="38" cy="6" rx="5" ry="2" fill="#EDE6DA"/>
<path d="M32 7 L36 5 L39 9 L34 9 Z" fill="#E0563C"/>
<rect x="19" y="36.5" width="5" height="1.2" fill="#E4604E"/><rect x="32" y="38.5" width="4" height="2" fill="#E4503E"/>
</g></svg>
<svg class="a" style="left:353px;top:386px;" width="98" height="74" viewBox="0 0 98 74"><rect width="98" height="74" fill="#ABA9AA"/>
<rect y="0" width="98" height="22" fill="#B6B2B1"/>
<rect y="55" width="98" height="19" fill="#A5A1A4"/>
<g filter="url(#b1)">
<rect x="4" y="8" width="40" height="12" fill="#C5B4AC" opacity=".55"/>
<rect x="2" y="0" width="2.5" height="40" fill="#4F5646"/>
<rect x="18" y="5.7" width="80" height="2" fill="#2A2632"/>
<rect x="16" y="20.8" width="82" height="2.2" fill="#3A3A38"/>
<rect x="31" y="37.7" width="32" height="1.8" fill="#33322F"/><rect x="86" y="37.7" width="12" height="1.8" fill="#3E4238"/>
<path d="M63 39 L73 29 L86 37 L82 46 L66 46 Z" fill="#A3A3A6" stroke="#6D706A" stroke-width="1.3"/>
<path d="M11 39 L20 32 L29 38 L27 45 L12 45 Z" fill="none" stroke="#CFCDCB" stroke-width="1.2"/>
<path d="M30 40 L27 48 L14 48" fill="none" stroke="#6E716B" stroke-width="1"/>
<rect x="50" y="55" width="0.8" height="19" fill="#807E86"/>
<path d="M84 55 L98 53 V74 H90 Z" fill="#9A9C9E"/>
<rect x="93" y="55" width="5" height="3" fill="#3E4238"/>
</g></svg>
<svg class="a" style="left:362px;top:463px;" width="80" height="80" viewBox="0 0 80 80"><rect width="80" height="80" fill="#BFC0C3"/>
<g filter="url(#b1)">
<path d="M0 0 H30 V22 L0 26 Z" fill="#CFD2D6"/>
<path d="M0 26 L22 30 L22 80 H0 Z" fill="#C6C8CC"/>
<rect x="46" y="0" width="34" height="28" fill="#A7AAAE"/>
<rect x="49" y="28" width="31" height="52" fill="#9C9FA3"/>
<rect x="52" y="12" width="6" height="14" fill="#D8D8D6"/><rect x="60" y="14" width="3" height="12" fill="#D0D0D0"/>
<rect x="66" y="20" width="14" height="9" fill="#C9CACB"/>
<rect x="67" y="3" width="13" height="12" fill="#2C2638"/>
<rect x="62" y="0" width="1.5" height="30" fill="#5A78B8"/>
<path d="M52 47 L80 56 V59 L52 50 Z" fill="#E6E8EA"/><path d="M48 61 L80 73 V76 L48 64 Z" fill="#E6E8EA"/>
<path d="M31 0 H48 V13 L42 16 H34 L31 12 Z" fill="#241E30"/>
<rect x="54" y="0" width="4" height="8" fill="#2A2436"/>
<ellipse cx="34" cy="22" rx="12" ry="7" fill="#E4C1A8"/>
<path d="M22 18 L30 16 L36 19 L42 17 L44 21 L32 23 L22 22 Z" fill="#F0D466"/>
<ellipse cx="36" cy="47" rx="14" ry="20" fill="#7C1611"/>
<path d="M24 32 L28 30 L30 44 L27 60 L22 56 L21 42 Z" fill="#D68A2A"/>
<path d="M46 38 L51 39 L52 58 L47 60 Z" fill="#861A14"/>
<path d="M27 36 l4 3 l-2 3 l-4 -3z M36 40 l3 2 l-3 5 l-2 -3z M42 46 l2 6 l-2 3z M34 56 l3 3 l-2 4z" fill="#5E6E52"/>
<path d="M38 38 l3 4 l-1 4z M44 54 l2 6 l-3 2z M29 62 l5 2 l-4 3z" fill="#D4822A"/>
<rect x="33" y="66" width="9" height="14" fill="#1F1A2B"/>
<path d="M28 80 L32 76 L35 80 Z" fill="#E8B030"/>
<rect x="0" y="18" width="1.5" height="6" fill="#5A78B8"/>
</g></svg>
<svg class="a" style="left:374px;top:545px;" width="56" height="82" viewBox="0 0 56 82"><rect width="56" height="82" fill="#FCFBF3"/>
<g filter="url(#b1)" fill="#CCCDD0" opacity=".85">
<rect x="4" y="4" width="20" height="2"/><rect x="30" y="6" width="20" height="3" fill="#6E7468"/><rect x="30" y="6" width="3" height="4" fill="#3E4A34"/>
<rect x="6" y="12" width="14" height="8"/><rect x="31" y="12" width="22" height="9"/>
<rect x="3" y="28" width="12" height="3"/><rect x="3" y="32" width="50" height="1.6"/><rect x="22" y="28" width="8" height="8"/><rect x="31" y="28" width="14" height="2"/>
<rect x="3" y="40" width="2" height="8"/><rect x="20" y="40" width="10" height="2"/><rect x="20" y="43" width="18" height="1.4"/>
<rect x="3" y="61" width="16" height="2"/><rect x="3" y="64" width="14" height="2.4"/><rect x="18" y="62" width="10" height="2"/><rect x="42" y="63" width="10" height="5"/>
<rect x="10" y="70" width="5" height="6"/><rect x="22" y="72" width="8" height="4"/><rect x="34" y="71" width="8" height="4"/><rect x="42" y="72" width="6" height="8"/>
</g></svg>
<svg class="a" style="left:324px;top:628px;" width="157" height="75" viewBox="0 0 157 75"><g filter="url(#b2)">
<path d="M20 26 L44 16 L60 18 L72 28 L60 44 L40 46 L30 36 Z" fill="#F8F1CF" opacity=".55"/>
<path d="M96 52 L132 48 L140 54 L120 68 L100 66 Z" fill="#F8F1CF" opacity=".55"/>
<path d="M20 34 L40 58 L80 56 L100 70 L120 72 L60 74 L30 60 Z" fill="#D6E4F4" opacity=".4"/>
</g>
<g filter="url(#b1)">
<path d="M24 30 L30 30 L44 42 L58 48 L56 54 L44 54 L40 44 L28 38 Z" fill="#C4C3C6"/>
<path d="M58 34 L64 36 L74 44 L70 48 L62 46 L58 40 Z" fill="#BFBCC0"/><path d="M58 33 l5 0 l1 8 l-5 0z" fill="#CDA898"/>
<path d="M56 16 L62 18 L78 30 L90 38 L84 40 L76 38 L70 28 L58 22 Z" fill="#BDBBC0"/>
<ellipse cx="93" cy="53" rx="6" ry="5" fill="#B5B3B8"/>
<path d="M99 54 L106 52 L108 62 L100 62 Z" fill="#D2B0A2"/>
<path d="M118 54 L128 50 L136 52 L132 58 L120 58 Z" fill="#D2B3A6"/>
<ellipse cx="109" cy="61" rx="6" ry="5.5" fill="#EFAE3C"/><ellipse cx="108.5" cy="61" rx="4.2" ry="4" fill="#C23B2E"/>
<ellipse cx="50" cy="51" rx="5" ry="2.5" fill="#A5A2A6"/><ellipse cx="68" cy="44" rx="4" ry="2" fill="#A5A2A6"/><ellipse cx="81" cy="38" rx="3.5" ry="2" fill="#A5A2A6"/>
</g></svg>
<svg class="a" style="left:362px;top:705px;" width="80" height="82" viewBox="0 0 80 82"><rect width="80" height="82" fill="#FCFBF3"/>
<g filter="url(#b1)">
<rect x="17" y="5" width="48" height="2.6" fill="#C2C6CE"/><rect x="17" y="10" width="48" height="3" fill="#C2C6CE"/>
<circle cx="38.5" cy="46.5" r="28" fill="#5B664C"/>
<circle cx="38.5" cy="47" r="26.6" fill="#241E36"/>
<path d="M64 48 L71 52 L66 60 Z" fill="#241E36"/>
<path d="M30 26 C40 21 52 24 58 32" fill="none" stroke="#5B664C" stroke-width="1.4"/>
<path d="M33 30 C40 27 48 28 53 34" fill="none" stroke="#5B664C" stroke-width="1.2"/>
<path d="M36 35 C40 33 45 34 48 38" fill="none" stroke="#5B664C" stroke-width="1.2"/>
<path d="M37 41 C40 39 43 40 45 42" fill="none" stroke="#5B664C" stroke-width="1.2"/>
<path d="M18 55 C24 66 34 72 46 72" fill="none" stroke="#5B664C" stroke-width="1.4"/>
<path d="M23 54 C28 63 36 67 44 68" fill="none" stroke="#5B664C" stroke-width="1.2"/>
<path d="M29 54 C33 60 38 62 44 63" fill="none" stroke="#5B664C" stroke-width="1.2"/>
</g></svg>
<svg class="a" style="left:353px;top:789px;" width="98" height="74" viewBox="0 0 98 74"><rect width="98" height="74" fill="#9C9FA3"/>
<g filter="url(#b1)">
<path d="M40 0 H98 V74 H84 L86 60 L60 62 L58 14 L40 14 Z" fill="#6A6D6A"/>
<path d="M42 0 L62 0 L58 12 L44 14 Z" fill="#8D9094"/>
<path d="M22 18 L26 15 L82 15 L86 20 L86 58 L26 60 L22 50 Z" fill="#5A614F"/>
<path d="M20 20 L34 16 L34 48 L26 40 Z" fill="#6A6D6A"/>
<rect x="68" y="18" width="16" height="36" fill="#555C4B"/>
<path d="M45 18 L52 19 L60 28 L62 48 L52 50 L48 56 L43 52 L44 36 Z" fill="#D9594B"/>
<path d="M50 22 L58 24 L60 34 L54 38 L50 32 Z" fill="#C7771D"/><path d="M54 42 L61 40 L62 49 L55 50 Z" fill="#C7771D"/>
<rect x="55" y="18" width="4" height="10" fill="#6F9A72"/>
<rect x="35" y="26" width="3.5" height="12" fill="#A6A9AE"/><rect x="35" y="41" width="3" height="8" fill="#A6A9AE"/>
<ellipse cx="23" cy="46" rx="3.6" ry="7" fill="#EEF3FA"/>
<ellipse cx="68" cy="58" rx="4" ry="3" fill="#6F9A72"/><ellipse cx="74" cy="60" rx="3" ry="2" fill="#B3B3B3"/>
<path d="M6 30 L18 34 L16 50 L4 52 Z" fill="#ABA6A6" opacity=".7"/>
</g></svg>
<svg class="a" style="left:362px;top:866px;" width="80" height="10" viewBox="0 0 80 10"><rect width="80" height="11" fill="#231C33"/><rect x="16" y="3" width="17" height="7" fill="#6C7468"/><rect x="17" y="4" width="14" height="2" fill="#A8ABAC"/><rect x="30" y="0" width="50" height="1.6" fill="#C8661C"/><rect x="44" y="1.6" width="36" height="1.5" fill="#7C1A16"/></svg>
<div class="a bt" style="left:259px;top:903px;width:120px;height:20px;font-weight:400">总记录：108</div>
<div class="a bt" style="left:393px;top:903px;width:120px;height:20px;font-weight:400">总页数：4</div>
<div class="a bt" style="left:523px;top:903px;width:120px;height:20px;font-weight:400">当前页：1</div>
<div class="a sim t15" style="left:1108px;top:902px;width:60px;height:20px;color:#7E7E7E">首页</div>
<div class="a sim t15" style="left:1157px;top:902px;width:60px;height:20px;color:#7E7E7E">上一页</div>
<div class="a sim t15" style="left:1214px;top:902px;width:60px;height:20px;color:#0A1FD8">下一页</div>
<div class="a sim t15" style="left:1278px;top:902px;width:60px;height:20px;color:#0A1FD8">尾页</div>
<div class="a sim t15" style="left:1333px;top:902px;width:60px;height:20px;color:#0A1FD8">全部</div>
<div class="a" style="left:11px;top:926px;width:74px;height:23px;background:linear-gradient(#E7EEF5,#EDF0EC 50%,#F3F1E3);border:1px solid #B5B5B5;border-bottom:none"></div>
<div class="a" style="left:184px;top:926px;width:73px;height:23px;background:linear-gradient(#E7EEF5,#EDF0EC 50%,#F3F1E3);border:1px solid #B5B5B5;border-bottom:none"></div>
<div class="a" style="left:257px;top:926px;width:75px;height:23px;background:linear-gradient(#E7EEF5,#EDF0EC 50%,#F3F1E3);border:1px solid #B5B5B5;border-bottom:none"></div>
<div class="a" style="left:332px;top:926px;width:73px;height:23px;background:linear-gradient(#E7EEF5,#EDF0EC 50%,#F3F1E3);border:1px solid #B5B5B5;border-bottom:none"></div>
<div class="a" style="left:84px;top:924px;width:101px;height:26px;background:#FCFBF3;border:1px solid #B5B5B5;border-bottom:none"></div>
<div class="a bt" style="left:19px;top:929px;width:70px;height:20px;">导航窗口</div>
<div class="a bt" style="left:94px;top:927px;width:70px;height:20px;">样品目录</div>
<div class="a bt" style="left:190px;top:929px;width:70px;height:20px;">报价开单</div>
<div class="a bt" style="left:264px;top:929px;width:70px;height:20px;">入库开单</div>
<div class="a bt" style="left:339px;top:929px;width:70px;height:20px;">出库开单</div>
<div class="a" style="left:164px;top:931px;width:13px;height:13px;background:#C8503F"></div>
<svg class="a" style="left:167px;top:934px" width="7" height="7" viewBox="0 0 7 7"><path d="M.5 .5 L6.5 6.5 M6.5 .5 L.5 6.5" stroke="#fff" stroke-width="1.6"/></svg>
<div class="a" style="left:9px;top:949px;width:1379px;height:25px;background:linear-gradient(#D3E3F7 0,#D3E3F7 6px,#BDD5F6 7px,#BDD5F6 17px,#D1E1F7 18px,#D1E1F7 100%);border-top:1px solid #6F8EC8;border-bottom:1px solid #A8C0E6"></div>
<div class="a" style="left:151px;top:952px;width:1px;height:19px;background:#8FB0E2"></div>
<div class="a" style="left:152px;top:952px;width:1px;height:19px;background:#E3EDFA"></div>
<div class="a" style="left:575px;top:952px;width:1px;height:19px;background:#8FB0E2"></div>
<div class="a" style="left:576px;top:952px;width:1px;height:19px;background:#E3EDFA"></div>
<div class="a" style="left:997px;top:952px;width:1px;height:19px;background:#8FB0E2"></div>
<div class="a" style="left:998px;top:952px;width:1px;height:19px;background:#E3EDFA"></div>
<div class="a" style="left:1211px;top:952px;width:1px;height:19px;background:#8FB0E2"></div>
<div class="a" style="left:1212px;top:952px;width:1px;height:19px;background:#E3EDFA"></div>
<div class="a" style="left:1364px;top:952px;width:1px;height:19px;background:#8FB0E2"></div>
<div class="a" style="left:1365px;top:952px;width:1px;height:19px;background:#E3EDFA"></div>
<div class="a st" style="left:11px;top:951px;width:100px;height:20px;">就绪</div>
<div class="a st" style="left:155px;top:951px;width:300px;height:20px;">安装目录：D:\优图软件5.1\客户端</div>
<div class="a st" style="left:578px;top:951px;width:400px;height:20px;">今天是：2020-06-29 星期一 庚子(鼠)年五月初九</div>
<div class="a st" style="left:1001px;top:951px;width:100px;height:20px;">第一账套</div>
<div class="a st" style="left:1215px;top:951px;width:150px;height:20px;">管理员(管理员)</div>
<div class="a" style="left:1366px;top:950px;width:22px;height:23px;background:linear-gradient(#C3D9F8 0,#C3D9F8 8px,#A2BAE0 9px,#A2BAE0 18px,#6FA3D8 19px,#6FA3D8 100%)"></div>
<svg class="a" style="left:1372px;top:955px" width="14" height="14" viewBox="0 0 14 14"><g fill="#4F62A8"><rect x="10" y="0" width="3" height="3"/><rect x="5" y="5" width="3" height="3"/><rect x="10" y="5" width="3" height="3"/><rect x="0" y="10" width="3" height="3"/><rect x="5" y="10" width="3" height="3"/><rect x="10" y="10" width="3" height="3"/></g></svg>
</body></html>
